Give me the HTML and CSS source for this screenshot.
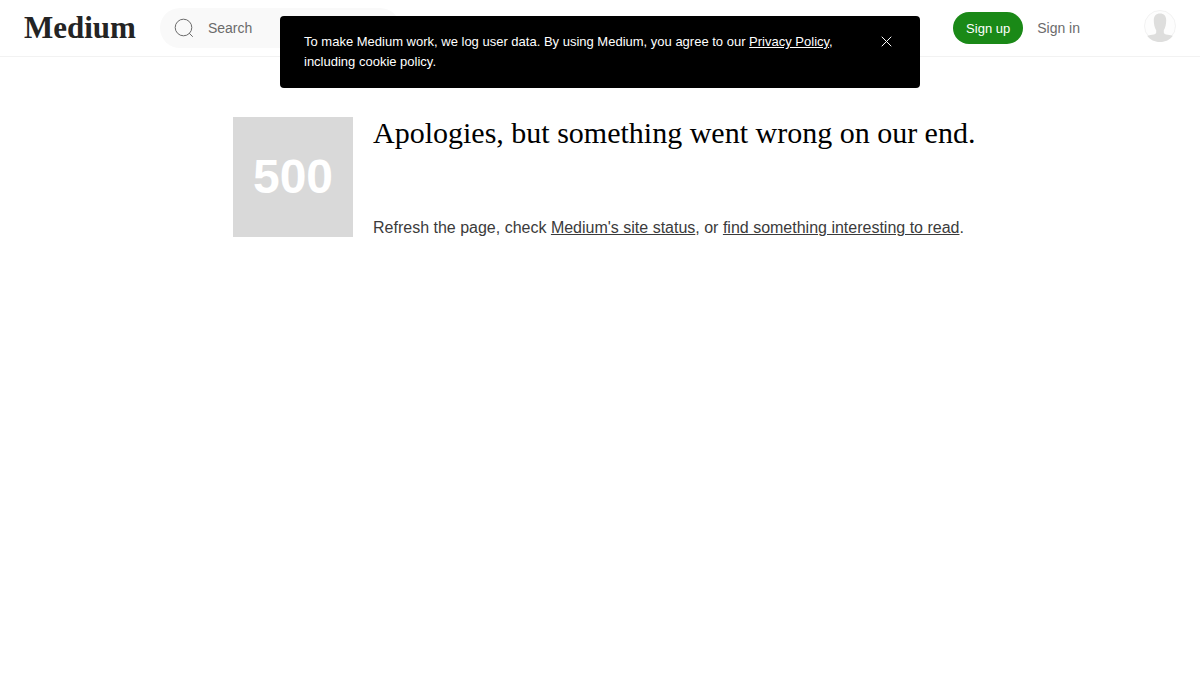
FILE: index.html
```html
<!DOCTYPE html>
<html lang="en">
<head>
    <meta charset="UTF-8">
    <meta name="viewport" content="width=device-width, initial-scale=1.0">
    <title>Medium</title>
    <link rel="stylesheet" href="styles.css">
</head>
<body>
    <header class="header">
        <a class="logo" href="#">Medium</a>
        <form class="search" role="search">
            <label for="search" aria-label="Search">
                <svg width="24" height="24" viewBox="0 0 24 24" fill="none" stroke="currentColor">
                    <circle cx="11.5" cy="11.5" r="8.3"/>
                    <path d="M17.4 17.400 20.500 20.500" stroke-linecap="round"/>
                </svg>
            </label>
            <input type="text" id="search" placeholder="Search">
        </form>
        <nav class="account">
            <button type="button" class="sign-up">Sign up</button>
            <a class="sign-in" href="#">Sign in</a>
            <button type="button" class="avatar" aria-label="User menu">
                <svg width="32" height="32" viewBox="0 0 32 32">
                    <circle cx="16" cy="16" r="15.5" fill="#fdfdfd" stroke="#f2f2f2"/>
                    <path d="M16 3.500c-4 0-6.200 2.500-6.200 6.800 0 4 .8 7.500 2.400 10v2.200c0 1.300-1.500 1.900-4 2.300-2.300.4-3.700.5-4.900 1.200C6 29.800 10.700 32 16 32s10-2.200 12.700-6c-1.200-.7-2.600-.8-4.900-1.200-2.500-.4-4-1-4-2.300v-2.200c1.600-2.500 2.400-6 2.400-10 0-4.300-2.200-6.800-6.200-6.800z" fill="#dededd"/>
                </svg>
            </button>
        </nav>
    </header>

    <div class="cookie-banner" role="status">
        <p>To make Medium work, we log user data. By using Medium, you agree to our <a href="#">Privacy Policy</a>, including cookie policy.</p>
        <button type="button" class="close" aria-label="Close">
            <svg width="19" height="19" viewBox="0 0 19 19" fill="none" stroke="currentColor">
                <path d="M5 5l9 9M14 5l-9 9" stroke-linecap="round"/>
            </svg>
        </button>
    </div>

    <main class="error">
        <div class="error-code">500</div>
        <div class="error-text">
            <h1>Apologies, but something went wrong on our end.</h1>
            <p>Refresh the page, check <a href="#">Medium's site status</a>, or <a href="#">find something interesting to read</a>.</p>
        </div>
    </main>
</body>
</html>
```
FILE: styles.css
```css
* {
    box-sizing: border-box;
}
body {
    margin: 0;
    background: #fff;
    font-family: "Liberation Sans", Arial, sans-serif;
}
h1,
p {
    margin: 0;
}
a {
    color: inherit;
}
button {
    border: none;
    padding: 0;
    background: none;
    font-family: inherit;
    cursor: pointer;
}
svg {
    display: block;
}

/* Top bar */
.header {
    display: flex;
    align-items: center;
    padding: 8px 24px;
    border-bottom: 1px solid #f2f2f2;
}
.logo {
    color: #242424;
    font-family: "Liberation Serif", "Times New Roman", serif;
    font-size: 31px;
    font-weight: bold;
    line-height: 40px;
    text-decoration: none;
}
.search {
    display: flex;
    align-items: center;
    width: 240px;
    height: 40px;
    margin-left: 24px;
    padding: 0 12px;
    border-radius: 20px;
    background: #f9f9f9;
    color: #6b6b6b;
}
.search input {
    width: 100%;
    margin-left: 12px;
    padding: 0;
    border: none;
    outline: none;
    background: transparent;
    color: #242424;
    font-family: inherit;
    font-size: 14px;
    line-height: 20px;
}
.search input::placeholder {
    color: #6b6b6b;
}
.account {
    display: flex;
    align-items: center;
    margin-left: auto;
}
.sign-up {
    height: 32px;
    padding: 0 13px;
    border-radius: 16px;
    background: #1a8917;
    color: #fff;
    font-size: 13px;
}
.sign-in {
    margin: 0 64px 0 14px;
    color: #6b6b6b;
    font-size: 14px;
    line-height: 20px;
    text-decoration: none;
}
.avatar {
    padding-bottom: 4px;
}

/* Cookie notice */
.cookie-banner {
    position: fixed;
    top: 16px;
    left: 0;
    right: 0;
    display: flex;
    align-items: flex-start;
    justify-content: space-between;
    max-width: 640px;
    margin: 0 auto;
    padding: 16px 24px;
    border-radius: 4px;
    background: #000;
    color: #fff;
    font-size: 13px;
    line-height: 20px;
}
.cookie-banner p {
    max-width: 536px;
}
.close {
    color: #fff;
}

/* Error message */
.error {
    display: flex;
    gap: 20px;
    max-width: 782px;
    margin: 0 auto;
    padding: 60px 12px 60px 24px;
}
.error-code {
    flex-shrink: 0;
    width: 120px;
    background: #d9d9d9;
    color: #fff;
    font-size: 48px;
    font-weight: bold;
    line-height: 120px;
    text-align: center;
}
.error-text {
    display: flex;
    flex-direction: column;
    justify-content: space-between;
}
.error-text h1 {
    color: #000;
    font-family: "Liberation Serif", "Times New Roman", serif;
    font-size: 30px;
    font-weight: normal;
    line-height: 32px;
}
.error-text p {
    color: #3b3b3b;
    font-size: 16px;
    line-height: 18px;
}
```
